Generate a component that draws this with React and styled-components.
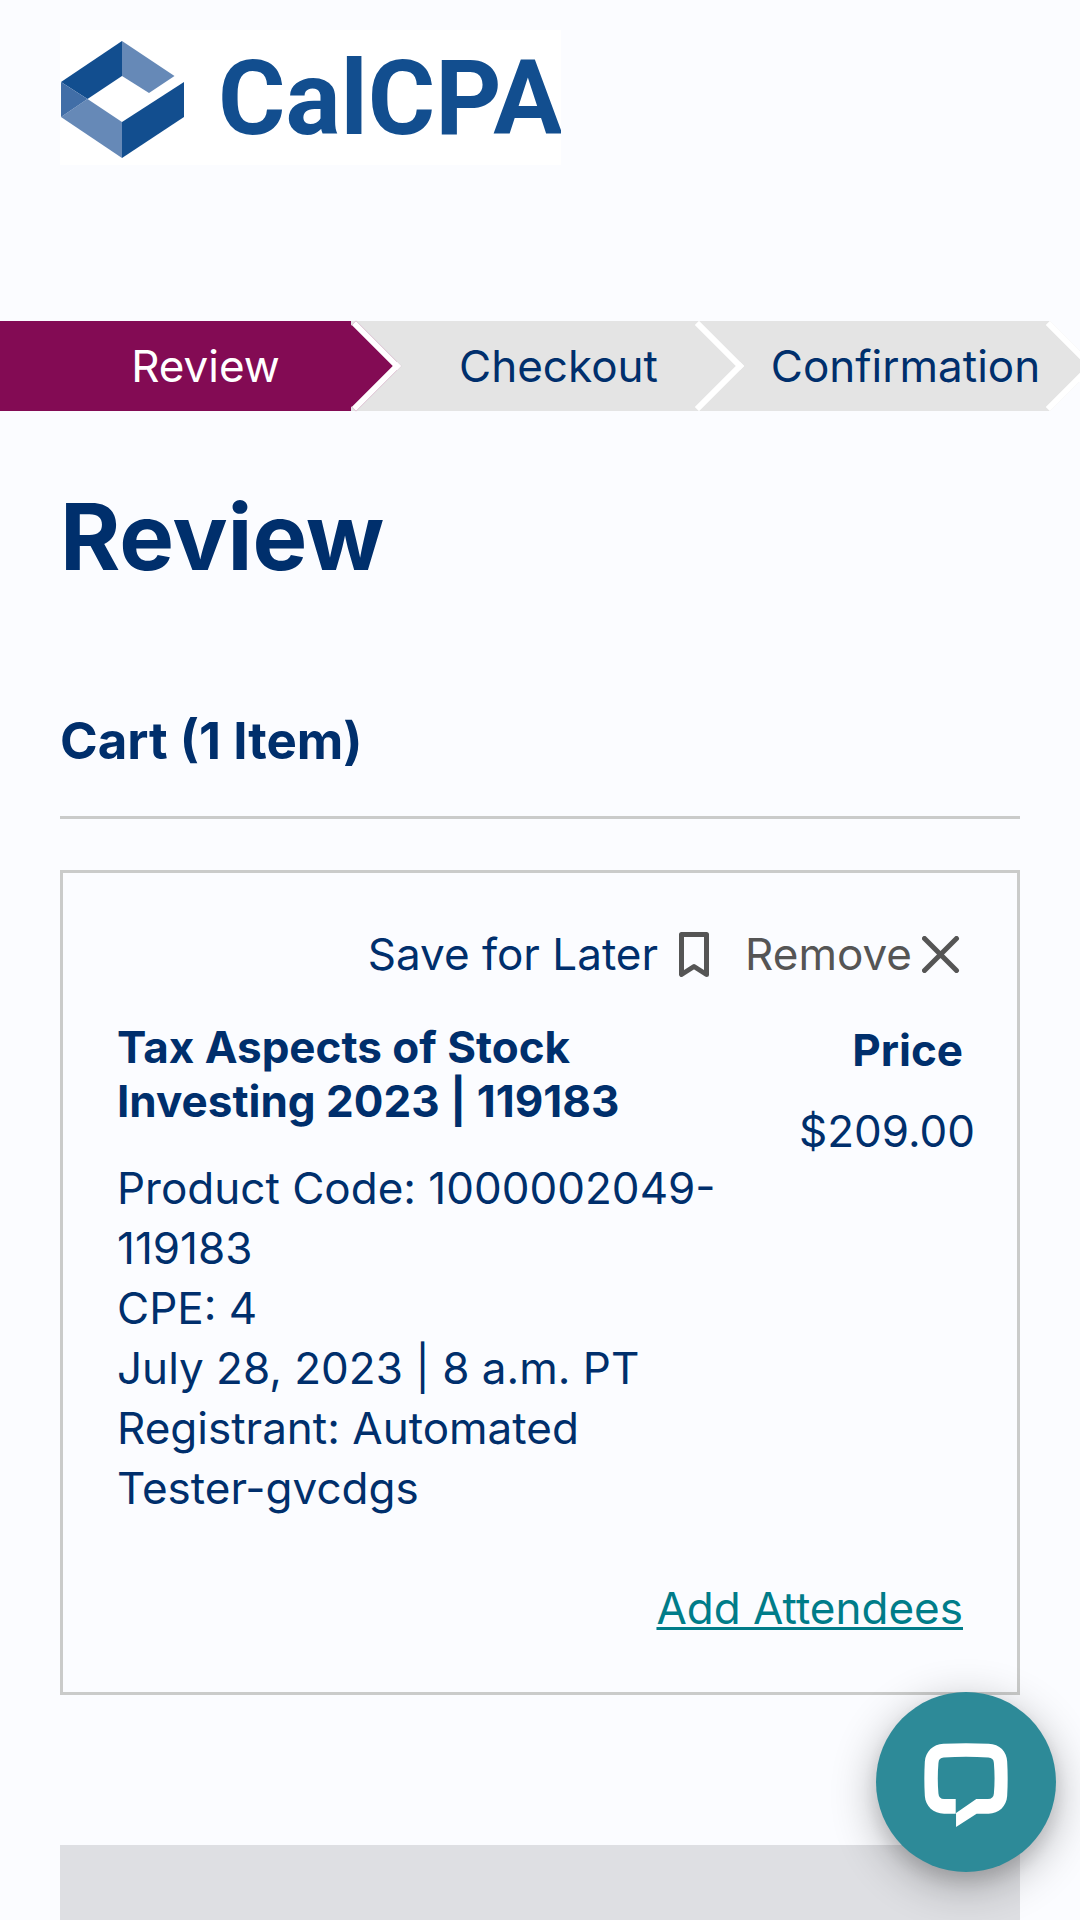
import React from "react";
import styled, { createGlobalStyle } from "styled-components";

const navy = "#002f6c";
const line = "#cacbca";

const GlobalStyle = createGlobalStyle`
  *, *::before, *::after { box-sizing: border-box; }
  body {
    margin: 0;
    background: #fbfcff;
    color: ${navy};
    font-family: Inter, "Liberation Sans", sans-serif;
    font-size: 44px;
    line-height: 60px;
  }
  h1, h2, h3, p, ol { margin: 0; padding: 0; }
`;

const Page = styled.div`
  overflow-x: clip;
`;

const Header = styled.header`
  padding: 30px 60px 156px;
`;

const LogoLink = styled.a`
  display: block;
  width: 501px;
  max-width: 100%;
  background: #fff;
  svg { display: block; width: 100%; height: auto; }
`;

const Steps = styled.ol`
  display: grid;
  grid-template-columns: 351fr 343fr 351fr;
  margin-right: 30px;
  padding-right: 5px;
  background: #e4e4e4;
  list-style: none;
`;

const Step = styled.li`
  position: relative;
  display: flex;
  align-items: center;
  justify-content: center;
  height: 90px;
  padding-left: ${(p) => (p.$current ? 60 : 72)}px;
  z-index: ${(p) => p.$layer};
  background: ${(p) => (p.$current ? "#830b54" : "#e4e4e4")};
  color: ${(p) => (p.$current ? "#fff" : navy)};

  &::after {
    content: "";
    position: absolute;
    top: 13px;
    right: -37px;
    width: 64px;
    height: 64px;
    border: solid #fff;
    border-width: 6px 6px 0 0;
    background: inherit;
    transform: rotate(45deg);
  }
`;

const StepLabel = styled.span`
  position: relative;
  z-index: 1;
`;

const Main = styled.main`
  padding: 72px 60px 0;
`;

const Title = styled.h1`
  font-size: 92px;
  line-height: 108px;
  font-weight: 700;
`;

const CartTitle = styled.h2`
  margin-top: 120px;
  padding-bottom: 45px;
  border-bottom: 3px solid ${line};
  font-size: 51px;
  line-height: 60px;
  font-weight: 700;
`;

const Card = styled.article`
  margin-top: 51px;
  padding: 51px 54px 54px;
  border: 3px solid ${line};
`;

const Actions = styled.div`
  display: flex;
  justify-content: flex-end;
  gap: 36px;
`;

const Action = styled.button`
  display: flex;
  align-items: center;
  gap: ${(p) => p.$gap}px;
  padding: 0;
  border: 0;
  background: none;
  color: ${(p) => (p.$muted ? "#555" : navy)};
  font: inherit;
  cursor: pointer;
  svg { display: block; }
`;

const Item = styled.div`
  display: grid;
  grid-template-columns: minmax(0, 1fr) auto;
  gap: 24px;
  margin: 36px -12px 0 0;
`;

const ItemTitle = styled.h3`
  max-width: 540px;
  margin-bottom: 30px;
  font-size: 44px;
  line-height: 54px;
  font-weight: 700;
`;

const Name = styled.span`
  white-space: nowrap;
`;

const Price = styled.div`
  display: flex;
  flex-direction: column;
  align-items: flex-end;
  gap: 21px;
`;

const PriceLabel = styled.strong`
  padding-right: 12px;
  font-weight: 700;
`;

const Attendees = styled.div`
  margin-top: 60px;
  text-align: right;
`;

const TextLink = styled.a`
  color: #007c89;
  text-decoration-thickness: 3px;
  text-underline-offset: 3px;
  text-decoration-skip-ink: none;
`;

const Summary = styled.section`
  height: 240px;
  margin-top: 150px;
  background: #dedfe3;
`;

const Viewport = styled.div`
  height: 100vh;
  overflow: hidden;
`;

const ChatButton = styled.button`
  position: fixed;
  right: 24px;
  bottom: 48px;
  z-index: 5;
  display: flex;
  align-items: center;
  justify-content: center;
  width: 180px;
  height: 180px;
  padding: 6px 0 0;
  border: 0;
  border-radius: 50%;
  background: #2d8a98;
  box-shadow: 0 12px 45px rgba(0, 0, 0, 0.3), 0 9px 18px rgba(0, 0, 0, 0.1);
  cursor: pointer;
`;

function Logo() {
  return (
    <svg viewBox="0 0 501 135" role="img" aria-label="CalCPA">
      <path fill="#124e8f" d="M62 11V46L27.500 69 1 52Z" />
      <path fill="#6689b7" d="M62 11 114.500 46 89 63 62 46Z" />
      <path fill="#124e8f" d="M62 92 124 52V87L62 128Z" />
      <path fill="#6689b7" d="M1 87 27.500 69 62 92V128Z" />
      <path fill="#416ea7" d="M1 52 27.500 69 1 87Z" />
      <text
        x="158"
        y="104"
        fill="#124e8f"
        fontFamily="Roboto, 'Liberation Sans', sans-serif"
        fontWeight="700"
        fontSize="103"
      >
        CalCPA
      </text>
    </svg>
  );
}

function BookmarkIcon() {
  return (
    <svg width="30" height="45" viewBox="0 0 30 45" aria-hidden="true">
      <path d="M2.500 2.500H27.500V42.500L15 34.500 2.500 42.500Z" fill="none" stroke="#555" strokeWidth="5" strokeLinejoin="round" />
    </svg>
  );
}

function CloseIcon() {
  return (
    <svg width="41" height="37" viewBox="0 0 41 37" aria-hidden="true">
      <path d="M2.500 2.500 34.500 34.500M34.500 2.500 2.500 34.500" fill="none" stroke="#555" strokeWidth="5" strokeLinecap="round" />
    </svg>
  );
}

function ChatIcon() {
  return (
    <svg width="84" height="84" viewBox="972 548 252 253" aria-hidden="true">
      <path
        fill="#fff"
        fillRule="evenodd"
        d="M1030 550Q1098 547 1166 550C1200 551 1221 574 1222 604Q1225 656 1222 708C1220 739 1197 761 1166 761H1130L1068 801V759L1129 717H1164Q1181 716 1182 700Q1186 656 1182 608Q1181 593 1165 592Q1098 587 1031 592Q1016 593 1015 608Q1011 656 1015 700Q1016 716 1032 717H1067V761H1032C1000 761 976 739 974 708Q971 656 974 604C976 574 999 551 1030 550Z"
      />
    </svg>
  );
}

const steps = ["Review", "Checkout", "Confirmation"];

export default function App() {
  return (
    <Viewport>
      <GlobalStyle />
      <Page>
        <Header>
          <LogoLink href="#home">
            <Logo />
          </LogoLink>
        </Header>

        <Steps>
          {steps.map((name, i) => (
            <Step key={name} $current={i === 0} $layer={steps.length - i} aria-current={i === 0 ? "step" : undefined}>
              <StepLabel>{name}</StepLabel>
            </Step>
          ))}
        </Steps>

        <Main>
          <Title>Review</Title>
          <CartTitle>Cart (1 Item)</CartTitle>

          <Card>
            <Actions>
              <Action type="button" $gap={21}>
                Save for Later
                <BookmarkIcon />
              </Action>
              <Action type="button" $gap={10} $muted>
                Remove
                <CloseIcon />
              </Action>
            </Actions>

            <Item>
              <div>
                <ItemTitle>Tax Aspects of Stock Investing 2023 | 119183</ItemTitle>
                <p>Product Code: 1000002049-119183</p>
                <p>CPE: 4</p>
                <p>July 28, 2023 | 8 a.m. PT</p>
                <p>
                  Registrant: Automated <Name>Tester-gvcdgs</Name>
                </p>
              </div>
              <Price>
                <PriceLabel>Price</PriceLabel>
                <span>$209.00</span>
              </Price>
            </Item>

            <Attendees>
              <TextLink href="#attendees">Add Attendees</TextLink>
            </Attendees>
          </Card>

          <Summary />
        </Main>
      </Page>

      <ChatButton type="button" aria-label="Open chat">
        <ChatIcon />
      </ChatButton>
    </Viewport>
  );
}
